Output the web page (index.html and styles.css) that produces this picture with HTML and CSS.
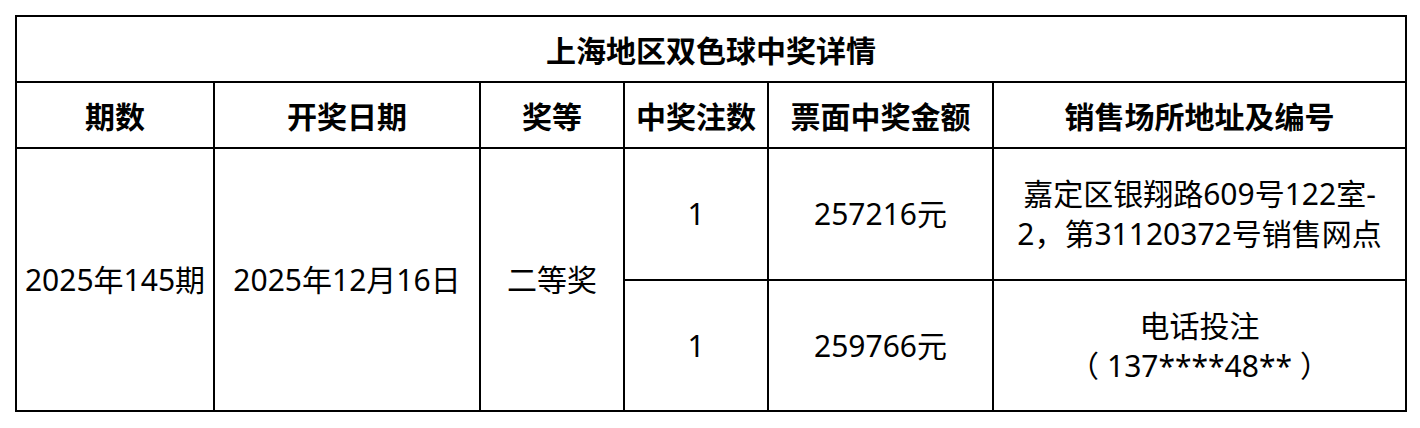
FILE: index.html
```html
<!DOCTYPE html>
<html lang="zh-CN">
<head>
<meta charset="utf-8">
<title>上海地区双色球中奖详情</title>
<link rel="stylesheet" href="styles.css">
</head>
<body>
<table class="prize-table">
  <colgroup>
    <col class="c1"><col class="c2"><col class="c3"><col class="c4"><col class="c5"><col class="c6">
  </colgroup>
  <tr class="row-title"><th colspan="6" class="title">上海地区双色球中奖详情</th></tr>
  <tr class="row-head">
    <th>期数</th><th>开奖日期</th><th>奖等</th><th>中奖注数</th><th>票面中奖金额</th><th>销售场所地址及编号</th>
  </tr>
  <tr class="row-data">
    <td rowspan="2">2025年145期</td>
    <td rowspan="2">2025年12月16日</td>
    <td rowspan="2">二等奖</td>
    <td>1</td>
    <td>257216元</td>
    <td>嘉定区银翔路609号122室-<br>2，第31120372号销售网点</td>
  </tr>
  <tr class="row-data2">
    <td>1</td>
    <td>259766元</td>
    <td>电话投注<br><span class="paren-l">（</span>137****48**<span class="paren-r">）</span></td>
  </tr>
</table>
</body>
</html>
```
FILE: styles.css
```css
html, body {
  margin: 0;
  padding: 0;
  background: #ffffff;
}
body {
  padding: 15px 0 0 15px;
  font-family: "Noto Sans", "Noto Sans CJK SC", sans-serif;
  color: #000;
}
.prize-table {
  border-collapse: collapse;
  table-layout: fixed;
  width: 1390px;
  border: 2px solid #000;
}
.c1 { width: 198px; }
.c2 { width: 266px; }
.c3 { width: 144px; }
.c4 { width: 144px; }
.c5 { width: 225px; }
.c6 { width: 413px; }
.prize-table th,
.prize-table td {
  border: 2px solid #000;
  text-align: center;
  vertical-align: middle;
  padding: 0;
  line-height: 40px;
  white-space: nowrap;
}
.prize-table th {
  font-weight: 700;
  font-size: 30px;
  font-family: "Noto Sans CJK SC", sans-serif;
}
.prize-table td {
  font-weight: 400;
  font-size: 30px;
}
.prize-table th.title {
  font-size: 30px;
}
.row-title { height: 66px; }
.row-head { height: 66px; }
.row-data { height: 132px; }
.row-data2 { height: 131px; }
.paren-l {
  margin-right: 8px;
}
.paren-r {
  margin-left: 8px;
}
```
